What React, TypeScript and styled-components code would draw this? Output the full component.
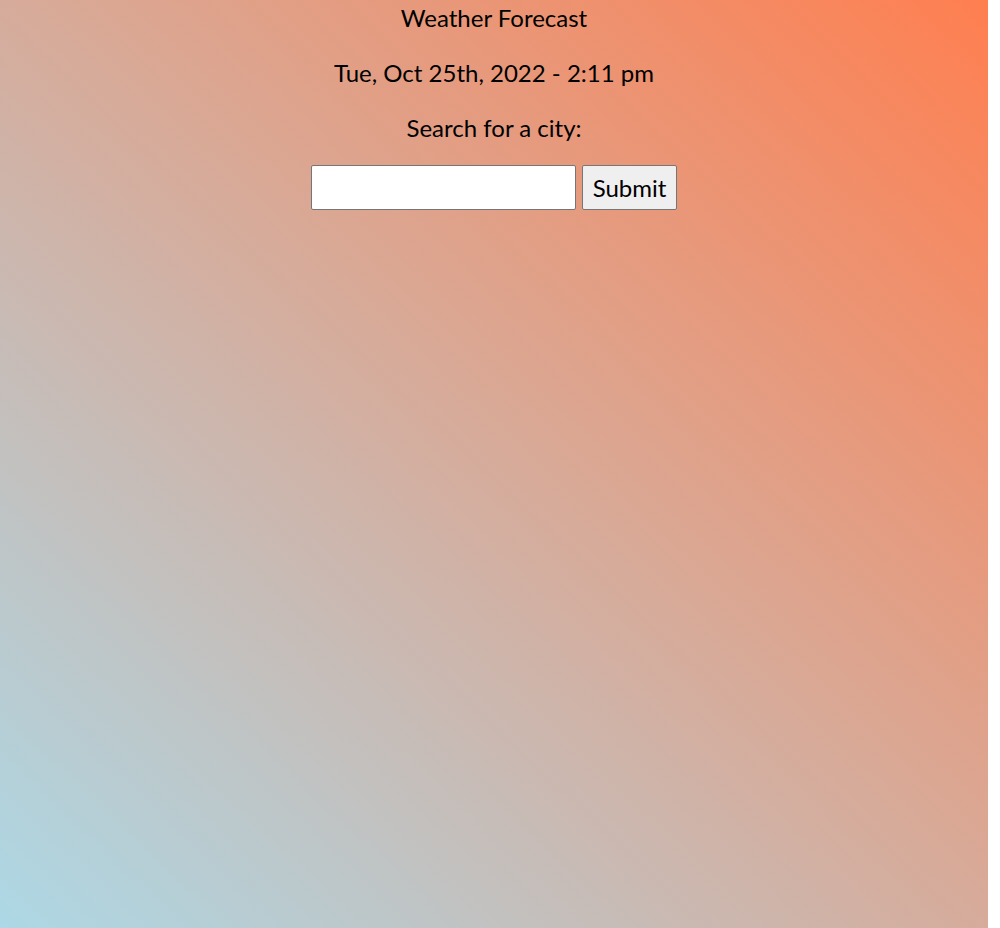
import React, { useState } from "react";
import styled, { createGlobalStyle } from "styled-components";

const GlobalStyle = createGlobalStyle`
  html, body {
    margin: 0;
    padding: 0;
    background: #fff;
  }
  body {
    font-family: Lato, "Open Sans", sans-serif;
  }
`;

const Bg = styled.div`
  min-height: 928px;
  margin-right: 12px;
  background: linear-gradient(to top right, #add8e6, #ff7f50);
  display: flex;
  flex-direction: column;
  align-items: center;
`;

const Line = styled.div`
  font-size: 24px;
  line-height: 36px;
  color: #000;
  text-align: center;
  margin-bottom: 19px;
`;

const Form = styled.form`
  display: flex;
  gap: 6px;
  margin-top: 0px;
`;

const Input = styled.input`
  width: 265px;
  height: 45px;
  box-sizing: border-box;
  border: 1px solid #767676;
  border-radius: 2px;
  background: #fff;
  font-size: 20px;
  padding: 4px 8px;
  outline: none;
`;

const Button = styled.button`
  height: 45px;
  width: 95px;
  box-sizing: border-box;
  border: 1px solid #767676;
  border-radius: 2px;
  background: #efefef;
  font-family: Lato, "Open Sans", sans-serif;
  font-size: 24px;
  color: #000;
  padding: 0;
  cursor: pointer;
`;

export default function App() {
  const [city, setCity] = useState("");

  return (
    <>
      <GlobalStyle />
      <Bg>
        <Line>Weather Forecast</Line>
        <Line>Tue, Oct 25th, 2022 - 2:11 pm</Line>
        <Line>Search for a city:</Line>
        <Form onSubmit={(e) => e.preventDefault()}>
          <Input value={city} onChange={(e) => setCity(e.target.value)} />
          <Button type="submit">Submit</Button>
        </Form>
      </Bg>
    </>
  );
}
